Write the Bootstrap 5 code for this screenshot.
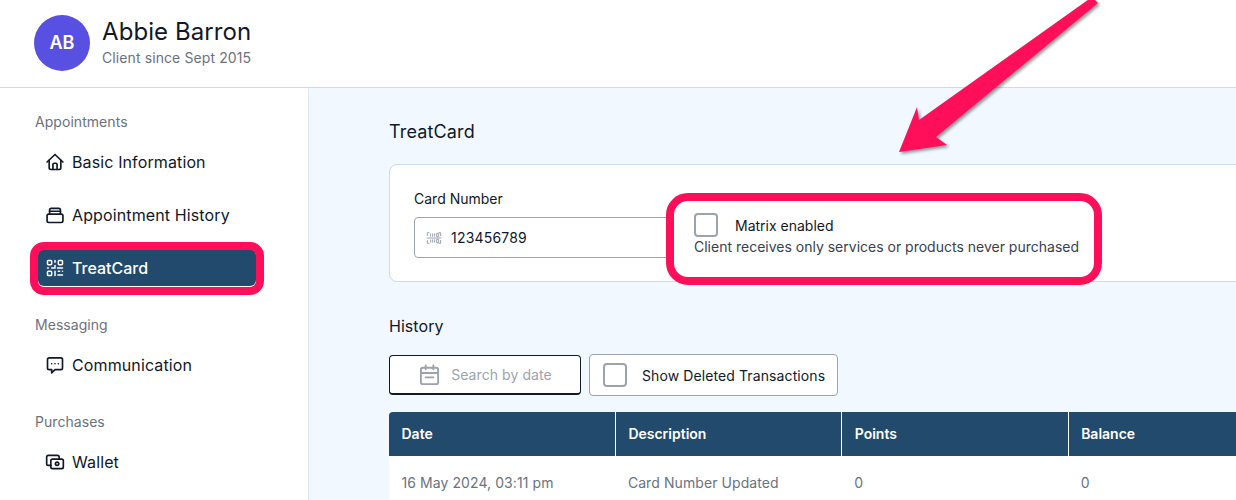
<!DOCTYPE html>
<html lang="en">
<head>
  <meta charset="UTF-8" />
  <meta name="viewport" content="width=device-width, initial-scale=1.0"/>
  <title>TreatCard - Abbie Barron</title>
  <link href="https://cdn.jsdelivr.net/npm/bootstrap@5.3.3/dist/css/bootstrap.min.css" rel="stylesheet"/>
  <style>
    html, body { height: 100%; overflow: hidden; }
    body { font-family: Inter, "Liberation Sans", sans-serif; color: #111827; background: #fff; position: relative; }
    .client-head { height: 88px; border-bottom: 1px solid #c9daf3; padding: 0 0 2px 34px; gap: 12px; }
    .client-avatar { width: 56px; height: 56px; background: #5850e0; font-size: 18px; font-weight: 600; }
    .client-name { font-size: 24px; line-height: 30px; margin-bottom: 1px; letter-spacing: .08px; }
    .client-since { font-size: 14px; line-height: 20px; color: #6b7280; letter-spacing: .1px; }
    .app-body { height: 412px; }
    .side-col { width: 309px; flex: none; border-right: 1px solid #dfe7f5; padding: 23px 0 0 30px; }
    .side-label { font-size: 14px; line-height: 21px; color: #6b7280; margin: 0 0 11px 5px; letter-spacing: .05px; }
    .side-link { width: 218px; height: 37px; margin: 0 0 16px 8px; padding-left: 7px; gap: 7px; font-size: 16px; letter-spacing: .12px; color: #111827; text-decoration: none; border-radius: 6px; }
    .side-link svg { width: 20px; height: 20px; flex: none; }
    .side-link.is-current { background: #224a6d; color: #fff; font-weight: 500; letter-spacing: 0; }
    .side-link.is-last { margin-bottom: 28px; }
    .main-col { background: #f1f8ff; padding: 34px 0 0 80px; overflow: hidden; min-width: 0; flex-grow: 1; }
    .main-inner { width: 906px; }
    .block-title { font-size: 18px; line-height: 20px; margin-bottom: 22px; letter-spacing: .15px; }
    .treat-panel { height: 118px; background: #fff; border: 1px solid #c9daf3; border-radius: 8px; padding: 23px 24px 0; margin-bottom: 34px; }
    .field-label { font-size: 14px; line-height: 21px; margin-bottom: 8px; }
    .card-field { width: 256px; height: 41px; border: 1px solid #9ca3af; border-radius: 4px; padding-left: 11px; gap: 9px; font-size: 14px; letter-spacing: .2px; }
    .card-field svg { width: 16px; height: 16px; flex: none; }
    .tick-box.form-check-input { width: 24px; height: 24px; margin: 0; border: 2px solid #9ca3af; border-radius: 4px; float: none; flex: none; }
    .matrix-wrap { margin: 25px 0 0 24px; font-size: 14px; }
    .matrix-top { gap: 17px; height: 24px; }
    .matrix-note { line-height: 20px; color: #374151; }
    .history-title { font-size: 16px; line-height: 20px; margin-bottom: 18px; letter-spacing: .05px; }
    .tool-row { gap: 8px; margin-bottom: 16px; height: 42px; }
    .date-search { width: 192px; height: 40px; border: 1px solid #111827; border-bottom-width: 2px; border-radius: 4px; background: #fff; color: #9ca3af; font-size: 14px; letter-spacing: .08px; gap: 10px; }
    .date-search svg { width: 23px; height: 23px; }
    .deleted-toggle { width: 249px; height: 42px; border: 1px solid #9ca3af; border-radius: 4px; background: #fff; padding-left: 13px; gap: 15px; font-size: 14px; letter-spacing: .1px; }
    .history-table { table-layout: fixed; width: 906px; font-size: 14px; margin: 0; }
    .history-table th { background: #224a6d; color: #fff; font-weight: 600; height: 44px; padding: 0 12px 2px 12.5px; vertical-align: middle; border-right: 1px solid #fff; border-bottom: 0; }
    .history-table th:first-child { border-top-left-radius: 4px; }
    .history-table td { background: #fff; color: #6b7280; height: 52px; padding: 0 12px 0 12.5px; vertical-align: middle; border: 0; letter-spacing: .08px; }
    .mark-box { position: absolute; border: 8px solid #ff0f5a; pointer-events: none; }
    .mark-nav { left: 30px; top: 242px; width: 234px; height: 53px; border-radius: 14px; }
    .mark-matrix { left: 666px; top: 193px; width: 436px; height: 92px; border-radius: 22px; }
    .mark-arrow { position: absolute; left: 890px; top: 0; width: 220px; height: 165px; pointer-events: none; filter: drop-shadow(2px 2px 1.5px rgba(0,0,0,.4)); }
  </style>
</head>
<body>
  <!-- Client header -->
  <header class="client-head d-flex align-items-center">
    <div class="client-avatar rounded-circle d-flex align-items-center justify-content-center text-white">AB</div>
    <div>
      <div class="client-name">Abbie Barron</div>
      <div class="client-since">Client since Sept 2015</div>
    </div>
  </header>

  <div class="app-body d-flex">
    <!-- Sidebar -->
    <nav class="side-col">
      <div class="side-label">Appointments</div>
      <a href="#" class="side-link d-flex align-items-center">
        <svg viewBox="0 0 24 24" fill="none" stroke="currentColor" stroke-width="2" stroke-linecap="round" stroke-linejoin="round"><path d="M2.500 12 12 3l9.500 9"/><path d="M5 10v9a2 2 0 0 0 2 2h10a2 2 0 0 0 2-2v-9"/><path d="M9.500 21v-6a1.500 1.500 0 0 1 1.500-1.500h2a1.500 1.500 0 0 1 1.500 1.500v6"/></svg>
        Basic Information
      </a>
      <a href="#" class="side-link d-flex align-items-center">
        <svg viewBox="0 0 24 24" fill="none" stroke="currentColor" stroke-width="2" stroke-linecap="round" stroke-linejoin="round"><rect x="2.500" y="11" width="19" height="10" rx="2"/><path d="M5.500 11V6a2 2 0 0 1 2-2h9a2 2 0 0 1 2 2v5"/><path d="M5.500 7.500h13"/></svg>
        Appointment History
      </a>
      <a href="#" class="side-link is-current is-last d-flex align-items-center">
        <svg viewBox="0 0 24 24" fill="none" stroke="currentColor" stroke-width="1.800" stroke-linecap="round" stroke-linejoin="round"><rect x="3" y="3" width="5" height="5" rx="1"/><rect x="16" y="3" width="5" height="5" rx="1"/><rect x="3" y="16" width="5" height="5" rx="1"/><path d="M12 3v2M12 9v3H8M3 12h1M15 12h6M16 16h1.500M21 16h0M12 16v5M15.500 20.500h5.500"/></svg>
        TreatCard
      </a>
      <div class="side-label">Messaging</div>
      <a href="#" class="side-link is-last d-flex align-items-center">
        <svg viewBox="0 0 24 24" fill="none" stroke="currentColor" stroke-width="2" stroke-linecap="round" stroke-linejoin="round"><path d="M5 3.500h14a2 2 0 0 1 2 2v10a2 2 0 0 1-2 2h-7l-4 4v-4H5a2 2 0 0 1-2-2v-10a2 2 0 0 1 2-2z"/><path d="M8 10.500h0M12 10.500h0M16 10.500h0"/></svg>
        Communication
      </a>
      <div class="side-label">Purchases</div>
      <a href="#" class="side-link d-flex align-items-center">
        <svg viewBox="0 0 24 24" fill="none" stroke="currentColor" stroke-width="2" stroke-linecap="round" stroke-linejoin="round"><rect x="7" y="8.500" width="15" height="11.500" rx="2"/><path d="M7 16H4a2 2 0 0 1-2-2V6a2 2 0 0 1 2-2h11a2 2 0 0 1 2 2v2.500"/><circle cx="14.500" cy="14.200" r="2"/></svg>
        Wallet
      </a>
    </nav>

    <!-- Main content -->
    <main class="main-col">
      <div class="main-inner">
        <div class="block-title">TreatCard</div>
        <section class="treat-panel d-flex">
          <div>
            <div class="field-label">Card Number</div>
            <div class="card-field d-flex align-items-center">
              <svg viewBox="0 0 24 24" fill="none" stroke="#9ca3af" stroke-width="1.500"><path d="M1 12h22M2 9V4h3M22 9V4h-3M2 15v5h3M22 15v5h-3M7 5v5M10 5v5M13 5v5M16 5h3v5h-3zM7 14v5M10 14v5M13 14v5M16 14h3v5h-3z"/></svg>
              123456789
            </div>
          </div>
          <div class="matrix-wrap">
            <div class="matrix-top d-flex align-items-center">
              <input type="checkbox" class="form-check-input tick-box" aria-label="Matrix enabled">
              <span>Matrix enabled</span>
            </div>
            <div class="matrix-note">Client receives only services or products never purchased</div>
          </div>
        </section>

        <div class="history-title">History</div>
        <div class="tool-row d-flex align-items-center">
          <div class="date-search d-flex align-items-center justify-content-center">
            <svg viewBox="0 0 24 24" fill="none" stroke="#9ca3af" stroke-width="2" stroke-linecap="round" stroke-linejoin="round"><rect x="3" y="5" width="18" height="17" rx="2"/><path d="M8 2.500v4M16 2.500v4M3 10.500h18M8 15h8"/></svg>
            Search by date
          </div>
          <label class="deleted-toggle d-flex align-items-center">
            <input type="checkbox" class="form-check-input tick-box">
            Show Deleted Transactions
          </label>
        </div>

        <table class="table history-table">
          <thead>
            <tr><th>Date</th><th>Description</th><th>Points</th><th>Balance</th></tr>
          </thead>
          <tbody>
            <tr><td>16 May 2024, 03:11 pm</td><td>Card Number Updated</td><td>0</td><td>0</td></tr>
          </tbody>
        </table>
      </div>
    </main>
  </div>

  <!-- Annotations over the screenshot -->
  <div class="mark-box mark-nav"></div>
  <div class="mark-box mark-matrix"></div>
  <svg class="mark-arrow" viewBox="890 0 220 165"><polygon fill="#ff0f5a" points="899,152 917,107 919,120 1092,-3 1098,3 936,137 947,145"/></svg>
</body>
</html>
